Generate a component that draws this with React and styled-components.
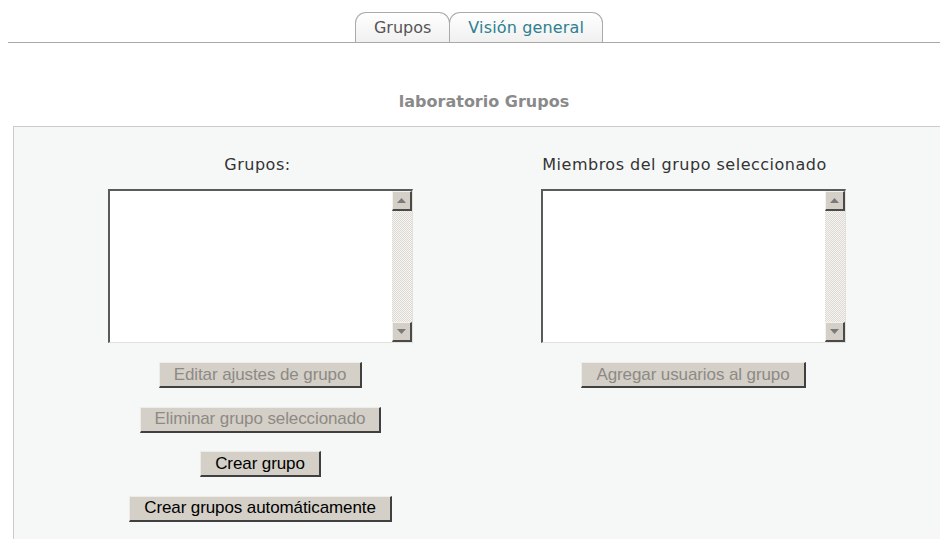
import React from "react";
import styled, { createGlobalStyle } from "styled-components";

const Global = createGlobalStyle`
  html, body { overflow: hidden; }
  body {
    margin: 8px;
    background: #ffffff;
    font-family: "DejaVu Sans", Verdana, sans-serif;
    font-size: 16px;
    color: #222;
  }
`;

const Page = styled.div`
  width: 942px;
`;

const TabBar = styled.div`
  display: flex;
  justify-content: center;
  padding-top: 4px;
  border-bottom: 1px solid #a9a9a9;
`;

const Tab = styled.div`
  height: 29px;
  line-height: 30px;
  padding: 0 18px;
  border: 1px solid #aaaaaa;
  border-bottom: none;
  border-radius: 11px 11px 0 0;
  background: linear-gradient(#ffffff, #f0f0f0);
  color: ${(p) => (p.$active ? "#555" : "#2e8090")};
  font-size: 16px;
  letter-spacing: ${(p) => (p.$active ? "0" : "0.15px")};
  & + & { margin-left: -1px; }
`;

const Heading = styled.h2`
  margin: 49px 0 15px;
  padding-left: 10px;
  text-align: center;
  font-size: 16px;
  line-height: 19px;
  font-weight: bold;
  color: #8a8a8a;
`;

const Panel = styled.div`
  margin-left: 5px;
  width: 960px;
  height: 420px;
  background: #f6f8f8;
  border-top: 1px solid #cccccc;
  border-left: 1px solid #cccccc;
  padding-top: 28px;
  padding-left: 30px;
  display: grid;
  grid-template-columns: 433px 433px;
  align-content: start;
`;

const Column = styled.div`
  display: flex;
  flex-direction: column;
  align-items: center;
`;

const Label = styled.div`
  line-height: 19px;
  color: #333;
  letter-spacing: 0.5px;
  margin-bottom: 15px;
  margin-left: ${(p) => p.$shift || 0}px;
`;

const ListBox = styled.div`
  width: 305px;
  height: 154px;
  box-sizing: border-box;
  background: #fff;
  border-style: solid;
  border-width: 2px 1px 1px 2px;
  border-color: #5a5a5a #e4e1dc #e4e1dc #5a5a5a;
  display: flex;
  justify-content: flex-end;
  margin-bottom: 19px;
`;

const ScrollBar = styled.div`
  width: 20px;
  display: flex;
  flex-direction: column;
  background: repeating-conic-gradient(#dcd9d3 0 25%, #f6f5f3 0 50%) 0 0 / 2px 2px;
`;

const Track = styled.div`
  flex: 1;
`;

const ScrollBtn = styled.div`
  width: 20px;
  height: 20px;
  box-sizing: border-box;
  background: #d4d0c8;
  border-style: solid;
  border-width: 1px 2px 2px 1px;
  border-color: #f4f2ee #4a4a4a #4a4a4a #f4f2ee;
  display: flex;
  align-items: center;
  justify-content: center;
`;

const Button = styled.button`
  height: 26px;
  box-sizing: border-box;
  padding: 0 14px;
  font-family: "Liberation Sans", Arial, sans-serif;
  font-size: 17px;
  letter-spacing: -0.1px;
  line-height: 22px;
  background: #d4d0c8;
  color: ${(p) => (p.disabled ? "#8d8a85" : "#000")};
  border-style: solid;
  border-width: 1px 2px 2px 1px;
  border-color: #eeece8 #404040 #404040 #eeece8;
  border-radius: 0;
  margin-bottom: 18.5px;
  cursor: default;
`;

const Arrow = ({ down }) => (
  <svg width="9" height="5" viewBox="0 0 9 5">
    <path d={down ? "M0 0H9L4.5 5Z" : "M4.5 0L9 5H0Z"} fill="#7a7a7a" />
  </svg>
);

const List = () => (
  <ListBox>
    <ScrollBar>
      <ScrollBtn><Arrow /></ScrollBtn>
      <Track />
      <ScrollBtn><Arrow down /></ScrollBtn>
    </ScrollBar>
  </ListBox>
);

export default function App() {
  return (
    <Page>
      <Global />
      <TabBar>
        <Tab $active>Grupos</Tab>
        <Tab>Visión general</Tab>
      </TabBar>
      <Heading>laboratorio Grupos</Heading>
      <Panel>
        <Column>
          <Label $shift={-6}>Grupos:</Label>
          <List />
          <Button disabled>Editar ajustes de grupo</Button>
          <Button disabled>Eliminar grupo seleccionado</Button>
          <Button>Crear grupo</Button>
          <Button>Crear grupos automáticamente</Button>
        </Column>
        <Column>
          <Label $shift={-18}>Miembros del grupo seleccionado</Label>
          <List />
          <Button disabled>Agregar usuarios al grupo</Button>
        </Column>
      </Panel>
    </Page>
  );
}
